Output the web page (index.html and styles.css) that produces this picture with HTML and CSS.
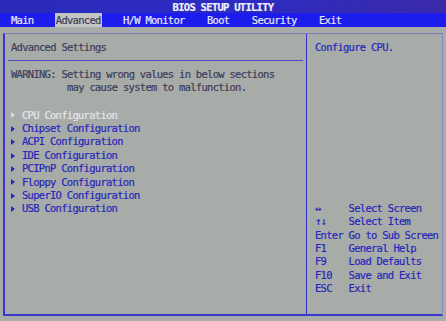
FILE: index.html
```html
<!DOCTYPE html>
<html lang="en">
<head>
    <meta charset="UTF-8">
    <meta name="viewport" content="width=device-width, initial-scale=1.0">
    <title>BIOS Setup Utility</title>
    <link rel="stylesheet" href="styles.css">
</head>
<body>
    <div class="title-bar">BIOS SETUP UTILITY</div>
    <div class="tab-bar">
        <span class="tab">Main</span>
        <span class="tab active">Advanced</span>
        <span class="tab">H/W Monitor</span>
        <span class="tab">Boot</span>
        <span class="tab">Security</span>
        <span class="tab">Exit</span>
    </div>

    <div class="frame">
        <div class="left-panel">
            <div class="heading">Advanced Settings</div>
            <hr class="divider">
            <div class="warning">
                <div>WARNING: Setting wrong values in below sections</div>
                <div class="indent">may cause system to malfunction.</div>
            </div>
            <ul class="menu">
                <li class="selected">CPU Configuration</li>
                <li>Chipset Configuration</li>
                <li>ACPI Configuration</li>
                <li>IDE Configuration</li>
                <li>PCIPnP Configuration</li>
                <li>Floppy Configuration</li>
                <li>SuperIO Configuration</li>
                <li>USB Configuration</li>
            </ul>
        </div>

        <div class="right-panel">
            <div class="help">Configure CPU.</div>
            <div class="keys">
                <span class="key">&harr;</span><span>Select Screen</span>
                <span class="key">&uarr;&darr;</span><span>Select Item</span>
                <span class="key">Enter</span><span>Go to Sub Screen</span>
                <span class="key">F1</span><span>General Help</span>
                <span class="key">F9</span><span>Load Defaults</span>
                <span class="key">F10</span><span>Save and Exit</span>
                <span class="key">ESC</span><span>Exit</span>
            </div>
        </div>
    </div>
</body>
</html>
```

FILE: styles.css
```css
body, html {
    margin: 0;
    padding: 0;
    height: 100%;
    overflow: hidden;
}
body {
    background-color: #a8aca8;
    font-family: "DejaVu Sans Mono", "Liberation Mono", monospace;
    font-size: 10.5px;
    letter-spacing: -0.72px;
    line-height: 13.4px;
    color: #2626bc;
    -webkit-text-stroke: 0.2px;
}
.title-bar {
    height: 13px;
    line-height: 14px;
    text-align: center;
    color: #f0f0f8;
    font-weight: bold;
    background: linear-gradient(90deg, #2a2ab8 0%, #2c2cc4 50%, #3a2aa8 100%);
}
.tab-bar {
    display: flex;
    height: 14px;
    line-height: 14px;
    padding-left: 11px;
    gap: 22.4px;
    background-color: #1c1cec;
    color: #e8e8f4;
}
.tab {
    white-space: pre;
}
.tab.active {
    background-color: #c4c6c4;
    color: #3a3a58;
    padding: 0 1px;
    margin: 0 -1px;
}
.frame {
    display: flex;
    height: 280px;
    margin: 6px 3px 0 3px;
    border-top: 1px solid #7a7ab8;
    border-left: 2px solid #3838d0;
    border-bottom: 2px solid #3838d0;
    border-right: 1px solid #8a8ab8;
}
.left-panel {
    width: 295px;
    padding: 7px 0 0 6px;
    border-right: 1.5px solid #3030c8;
}
.heading, .warning {
    color: #3c3c5c;
}
.divider {
    border: none;
    border-top: 1px solid #4a4ac0;
    margin: 6px 3px 6.4px -3px;
    height: 0;
}
.indent {
    padding-left: 56px;
}
.menu {
    list-style: none;
    margin: 14px 0 0 0;
    padding: 0;
}
.menu li {
    display: flex;
    align-items: center;
    gap: 7px;
}
.menu li::before {
    content: "";
    border-top: 3px solid transparent;
    border-bottom: 3px solid transparent;
    border-left: 4px solid #2626bc;
}
.menu li.selected {
    color: #e4e6ec;
}
.menu li.selected::before {
    border-left-color: #d8dae4;
}
.right-panel {
    flex: 1;
    display: flex;
    flex-direction: column;
    padding: 7px 0 0 8px;
}
.keys {
    display: grid;
    grid-template-columns: 33.6px auto;
    margin-top: 147.4px;
    white-space: pre;
}
```
